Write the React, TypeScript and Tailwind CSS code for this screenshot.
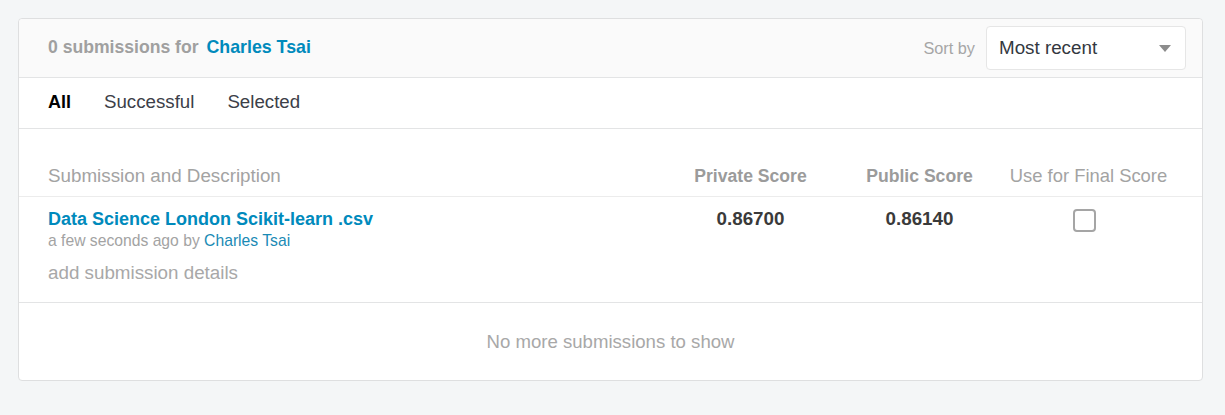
const font = { fontFamily: '"Liberation Sans", Arial, sans-serif' };

export default function App() {
  return (
    <div className="min-h-[415px] bg-[#f4f6f7] pl-[18px] pr-[22px] pt-[18px]" style={font}>
      <div className="rounded-[4px] border border-[#dedfe0] bg-white">
        {/* header */}
        <div className="flex h-[59px] items-center justify-between rounded-t-[4px] border-b border-[#e3e4e5] bg-[#fafafa] pb-[2px] pl-[29px] pr-[16px]">
          <div className="text-[17.6px] font-semibold text-[#a0a0a0]">
            0 submissions for <span className="ml-[3px] text-[17.8px] font-bold text-[#008abc]">Charles Tsai</span>
          </div>
          <div className="mt-[2px] flex items-center gap-[11px]">
            <span className="text-[16.3px] text-[#a6a6a6]">Sort by</span>
            <div className="flex h-[44px] w-[200px] items-center justify-between rounded-[4px] border border-[#e6e6e6] bg-white pl-[12px] pr-[14px]">
              <span className="text-[18.8px] text-[#333840]">Most recent</span>
              <svg width="12" height="7" viewBox="0 0 12 7">
                <path d="M0 0h12L6 7z" fill="#8c8c8c" />
              </svg>
            </div>
          </div>
        </div>

        {/* tabs */}
        <div className="flex h-[51px] items-center border-b border-[#e3e4e5] px-[29px] pb-[2px] text-[18.7px] text-[#3c4048]">
          <span className="mr-[33px] text-[18px] font-bold text-black">All</span>
          <span className="mr-[33px]">Successful</span>
          <span>Selected</span>
        </div>

        {/* table header */}
        <div className="flex items-center border-b border-[#ececec] px-[29px] pb-[8px] pt-[35px] leading-[24px]">
          <div className="flex-1 text-[18.8px] text-[#a3a3a3]">Submission and Description</div>
          <div className="w-[169px] text-center text-[17.6px] font-semibold text-[#9b9b9b]">Private Score</div>
          <div className="w-[169px] text-center text-[17.6px] font-semibold text-[#9b9b9b]">Public Score</div>
          <div className="w-[169px] text-center text-[18.4px] text-[#a3a3a3]">Use for Final Score</div>
        </div>

        {/* row */}
        <div className="flex border-b border-[#e3e4e5] px-[29px] pb-[17px] pt-[10px]">
          <div className="flex-1">
            <div className="text-[18px] font-bold leading-[24px] text-[#008abc]">Data Science London Scikit-learn .csv</div>
            <div className="text-[15.7px] leading-[20px] text-[#a3a3a3]">
              a few seconds ago by <span className="text-[#1a8ab5]">Charles Tsai</span>
            </div>
            <div className="mt-[10px] text-[18.8px] leading-[24px] text-[#a8a8a8]">add submission details</div>
          </div>
          <div className="w-[169px] text-center text-[18.8px] font-bold leading-[24px] text-[#3a3a3a]">0.86700</div>
          <div className="w-[169px] text-center text-[18.8px] font-bold leading-[24px] text-[#3a3a3a]">0.86140</div>
          <div className="flex w-[169px] justify-center pr-[8px] pt-[2px]">
            <div className="h-[23px] w-[23px] rounded-[4px] border-2 border-[#a5a5a5] bg-white" />
          </div>
        </div>

        {/* footer */}
        <div className="flex h-[77px] items-center justify-center text-[18.6px] text-[#a8a8a8]">
          No more submissions to show
        </div>
      </div>
    </div>
  );
}
